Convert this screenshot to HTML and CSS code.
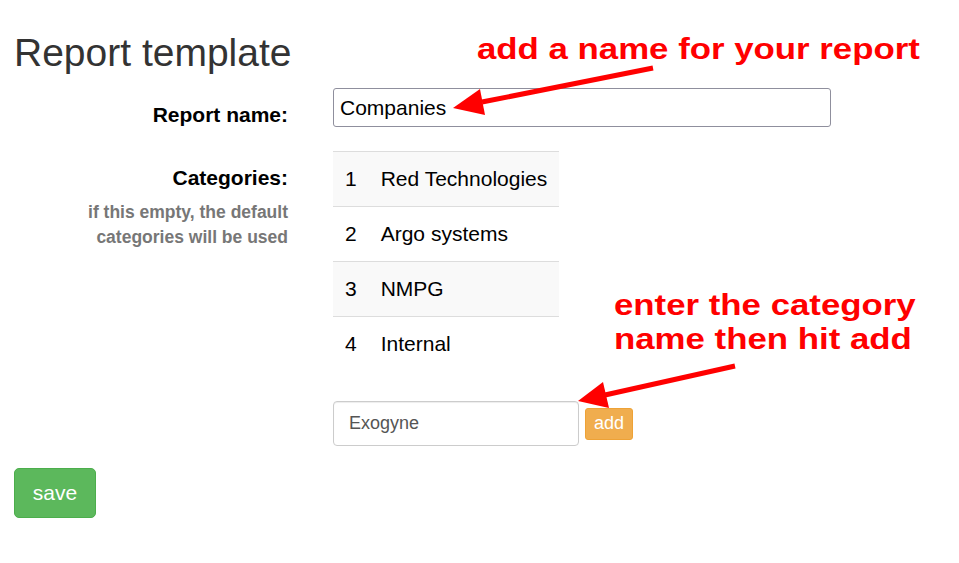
FILE: index.html
```html
<!DOCTYPE html>
<html lang="en">
<head>
    <meta charset="UTF-8">
    <meta name="viewport" content="width=device-width, initial-scale=1.0">
    <title>Report template</title>
    <link rel="stylesheet" href="styles.css">
</head>
<body>
    <div class="page">
        <h1>Report template</h1>

        <form class="report-form">
            <div class="form-row">
                <label class="control-label" for="report-name">Report name:</label>
                <div class="field">
                    <input class="name-input" id="report-name" type="text" value="Companies">
                </div>
            </div>

            <div class="form-row categories-row">
                <div class="label-col">
                    <label class="control-label">Categories:</label>
                    <p class="help-text">if this empty, the default<br>categories will be used</p>
                </div>
                <div class="field">
                    <table class="category-table">
                        <tr><td class="num">1</td><td>Red Technologies</td></tr>
                        <tr><td class="num">2</td><td>Argo systems</td></tr>
                        <tr><td class="num">3</td><td>NMPG</td></tr>
                        <tr><td class="num">4</td><td>Internal</td></tr>
                    </table>
                    <div class="add-row">
                        <input class="category-input" type="text" value="Exogyne">
                        <button type="button" class="btn-add">add</button>
                    </div>
                </div>
            </div>

            <button type="button" class="btn-save">save</button>
        </form>

        <!-- annotations -->
        <div class="note note-name">add a name for your report</div>
        <div class="note note-category">enter the category<br>name then hit add</div>

        <svg class="arrows" width="959" height="563" viewBox="0 0 959 563">
            <line x1="653" y1="68" x2="482" y2="102" stroke="#ff0000" stroke-width="5"/>
            <polygon points="453,108 480,89 485,115" fill="#ff0000"/>
            <line x1="735" y1="366" x2="605" y2="395" stroke="#ff0000" stroke-width="5"/>
            <polygon points="578,401 603,382 609,408" fill="#ff0000"/>
        </svg>
    </div>
</body>
</html>
```

FILE: styles.css
```css
body {
    margin: 0;
    font-family: "Liberation Sans", Arial, sans-serif;
    color: #000;
    background: #fff;
}

.page {
    position: relative;
    width: 959px;
    height: 563px;
    box-sizing: border-box;
    padding: 31px 14px 0;
}

h1 {
    margin: 0 0 13px;
    font-size: 39px;
    line-height: 44px;
    font-weight: normal;
    color: #333;
}

.form-row {
    display: grid;
    grid-template-columns: 274px 498px;
    column-gap: 45px;
    margin-bottom: 24px;
}

.control-label {
    display: block;
    padding-top: 14px;
    font-size: 21px;
    line-height: 25px;
    font-weight: bold;
    text-align: right;
}

.help-text {
    margin: 10px 0 0;
    font-size: 17.5px;
    line-height: 25px;
    font-weight: bold;
    color: #777;
    text-align: right;
}

.name-input {
    display: block;
    width: 100%;
    height: 39px;
    box-sizing: border-box;
    padding: 0 6px;
    border: 1px solid #8f8f9d;
    border-radius: 3px;
    font-family: inherit;
    font-size: 21px;
    color: #000;
}

.category-table {
    border-collapse: collapse;
    font-size: 21px;
    line-height: 30px;
}

.category-table td {
    padding: 12px;
    border-top: 1px solid #ddd;
}

.category-table tr:nth-child(odd) {
    background: #f9f9f9;
}

.add-row {
    display: flex;
    align-items: center;
    gap: 6px;
    margin-top: 30px;
}

.category-input {
    width: 246px;
    height: 45px;
    box-sizing: border-box;
    padding: 0 15px;
    border: 1px solid #ccc;
    border-radius: 4px;
    box-shadow: inset 0 1px 1px rgba(0, 0, 0, 0.075);
    font-family: inherit;
    font-size: 18px;
    color: #555;
}

.btn-add {
    height: 32px;
    padding: 0 8px;
    border: 1px solid #eea236;
    border-radius: 3px;
    background: #f0ad4e;
    color: #fff;
    font-family: inherit;
    font-size: 18px;
}

.btn-save {
    display: block;
    margin-top: -2px;
    width: 82px;
    height: 50px;
    padding: 0;
    border: 1px solid #4cae4c;
    border-radius: 5px;
    background: #5cb85c;
    color: #fff;
    font-family: inherit;
    font-size: 21px;
}

.note {
    position: absolute;
    font-size: 30px;
    line-height: 34px;
    font-weight: bold;
    color: #ff0000;
    white-space: nowrap;
    transform: scaleX(1.16);
    transform-origin: 0 0;
}

.note-name {
    left: 477px;
    top: 32px;
}

.note-category {
    left: 614px;
    top: 288px;
}

.arrows {
    position: absolute;
    top: 0;
    left: 0;
    pointer-events: none;
}
```
